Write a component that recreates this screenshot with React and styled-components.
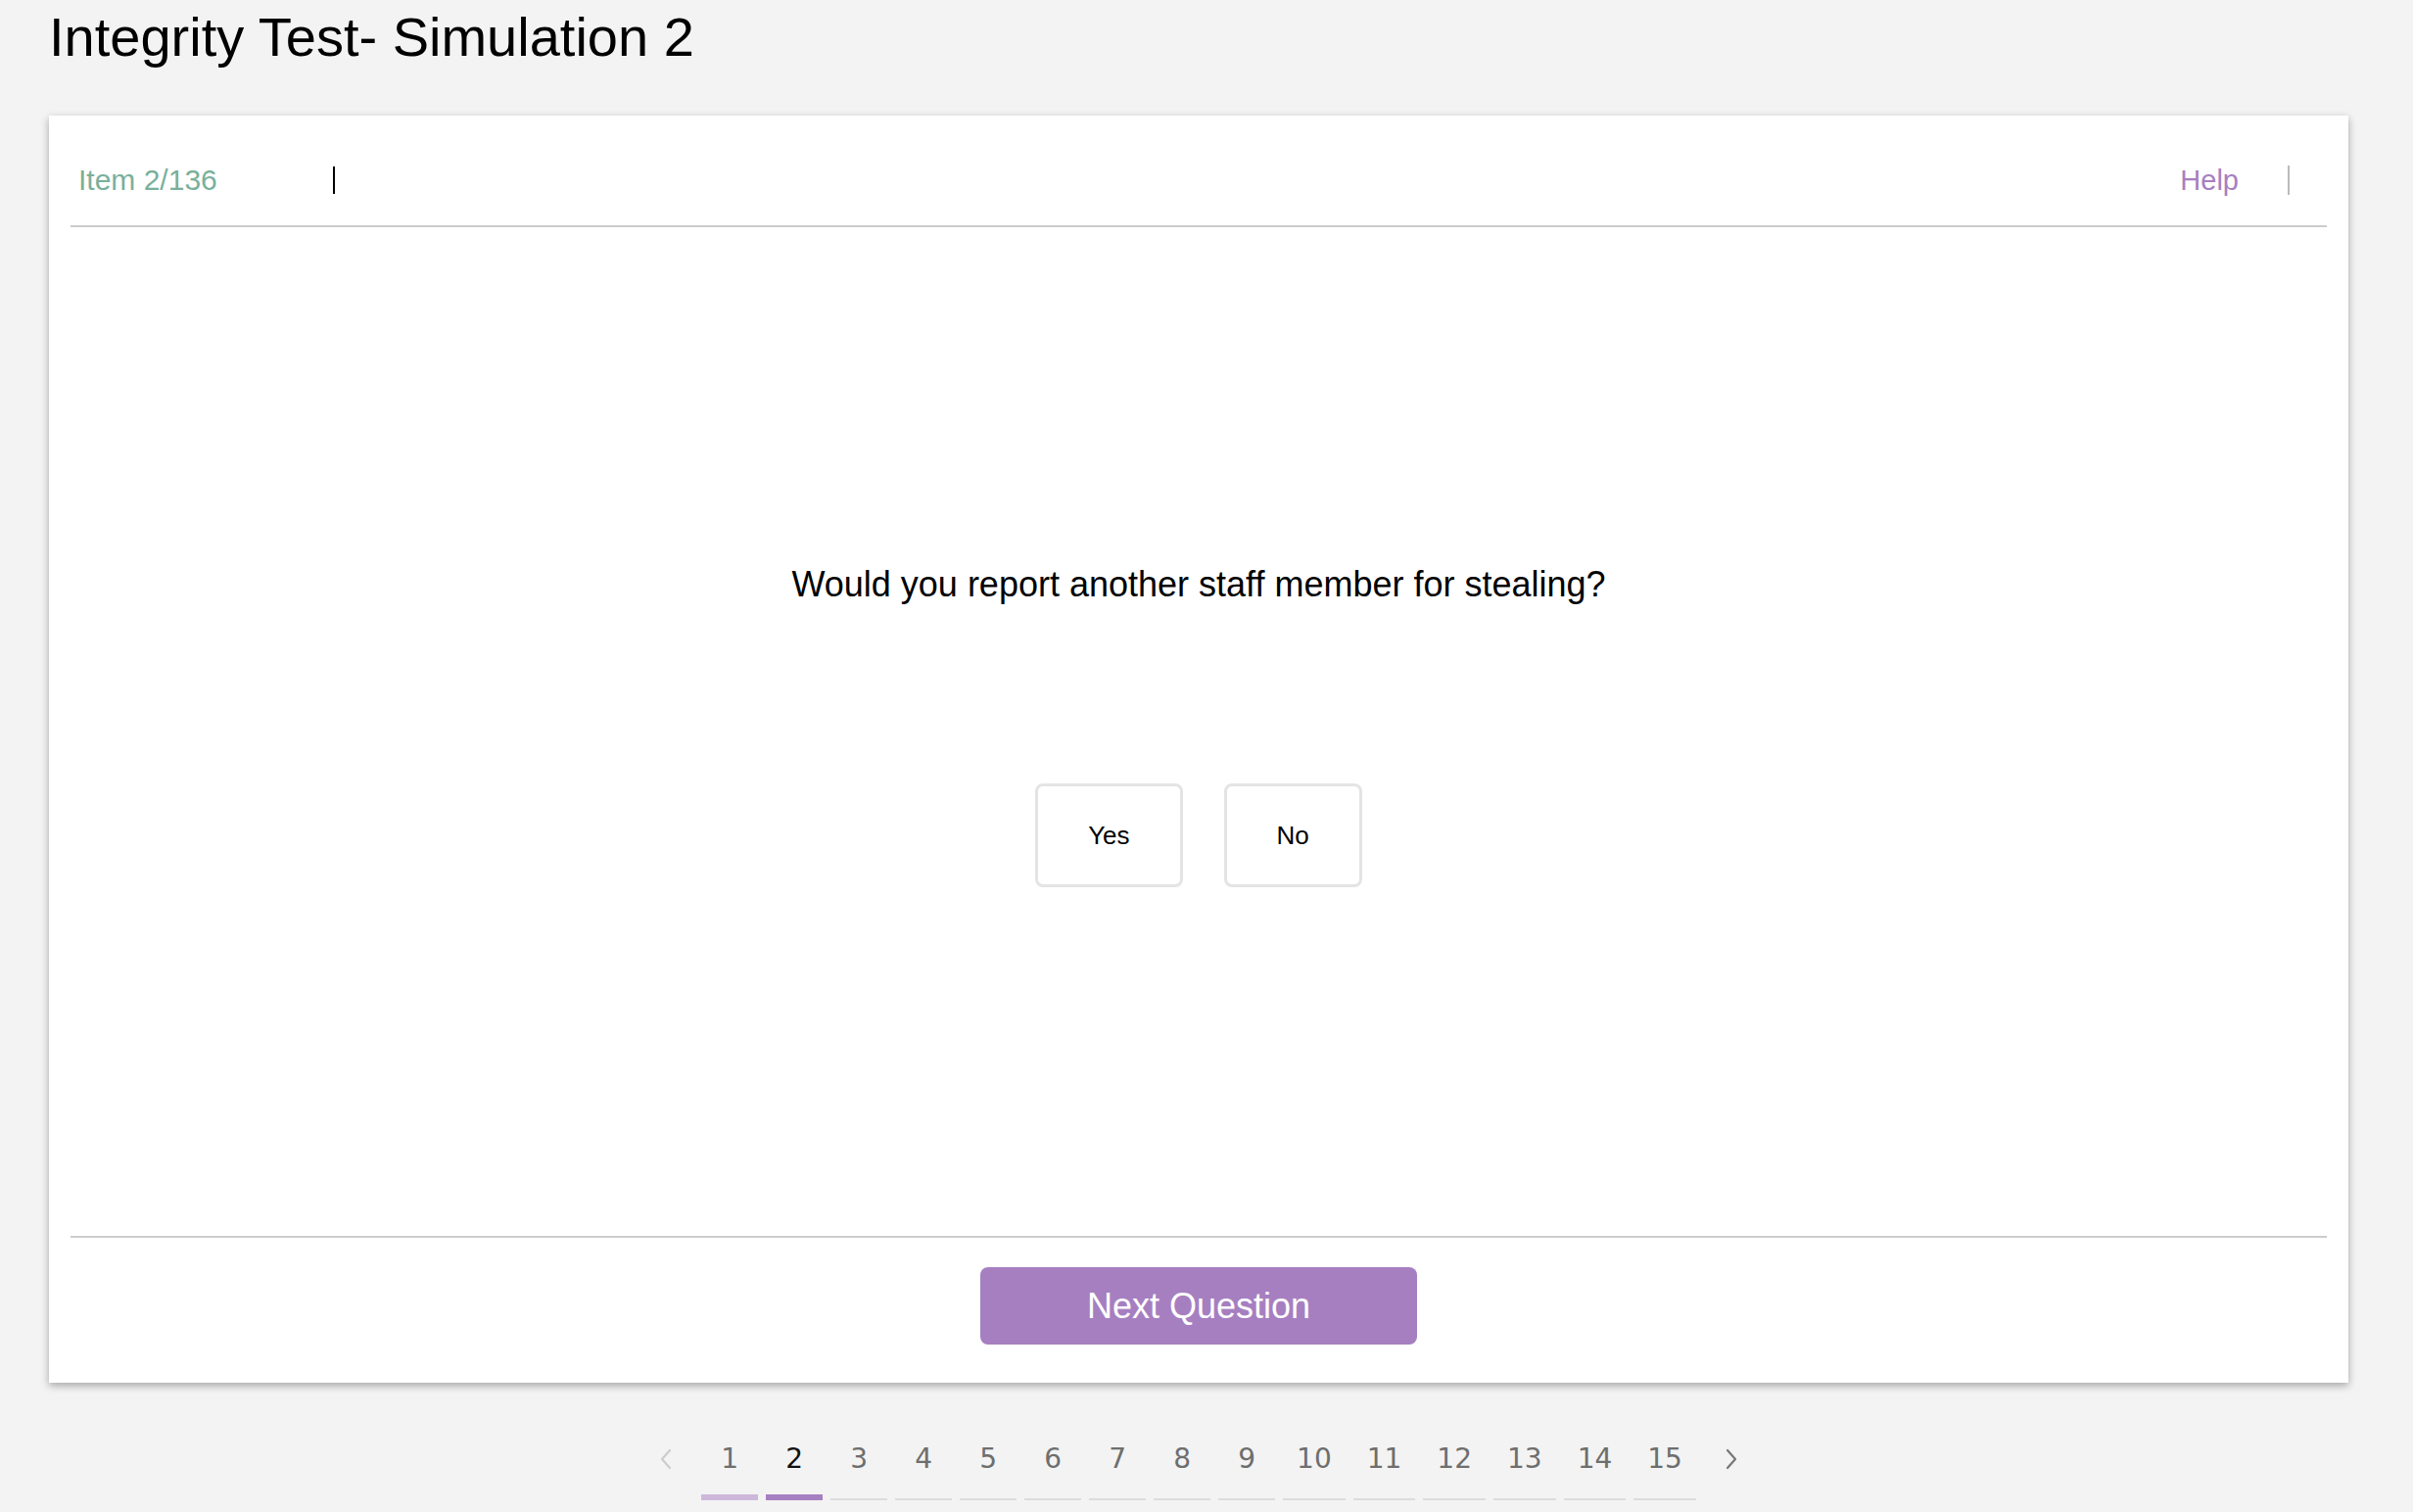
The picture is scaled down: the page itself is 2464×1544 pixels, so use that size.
import React from 'react'
import styled, { createGlobalStyle } from 'styled-components'

const GlobalStyle = createGlobalStyle`
  html, body {
    margin: 0;
    padding: 0;
    background: #f3f3f3;
    font-family: "Liberation Sans", Arial, sans-serif;
  }
`

const PURPLE = '#a67fc1'

const Page = styled.div`
  padding: 0 66px 0 50px;
`

const Title = styled.h1`
  margin: 6px 0 0 0;
  font-size: 56px;
  line-height: 64px;
  font-weight: 400;
  color: #000;
`

const Card = styled.section`
  margin-top: 48px;
  background: #fff;
  padding: 0 22px;
  box-shadow: 0 3px 8px rgba(0, 0, 0, 0.32);
`

const Header = styled.header`
  display: flex;
  align-items: center;
  padding: 51px 38px 31px 8px;
  border-bottom: 2px solid #cccccc;
`

const ItemCount = styled.span`
  font-size: 30px;
  line-height: 30px;
  color: #79b09b;
`

const Caret = styled.span`
  width: 2px;
  height: 28px;
  margin-left: 118px;
  background: #000;
`

const Spacer = styled.div`
  flex: 1;
`

const HelpLink = styled.a`
  font-size: 29px;
  line-height: 30px;
  color: ${PURPLE};
  cursor: pointer;
`

const Divider = styled.span`
  width: 2px;
  height: 30px;
  margin-left: 50px;
  background: #bbbbbb;
`

const Body = styled.div`
  display: flex;
  flex-direction: column;
  align-items: center;
  padding: 344px 0 356px;
`

const Question = styled.p`
  margin: 0;
  font-size: 36px;
  line-height: 42px;
  color: #000;
`

const Choices = styled.div`
  display: flex;
  gap: 42px;
  margin-top: 182px;
`

const Choice = styled.button`
  height: 106px;
  padding: 0 51px;
  border: 3px solid #e4e4e4;
  border-radius: 8px;
  background: #fff;
  font-family: inherit;
  font-size: 26px;
  color: #000;
  cursor: pointer;
`

const Footer = styled.footer`
  display: flex;
  justify-content: center;
  padding: 30px 0 39px;
  border-top: 2px solid #cccccc;
`

const NextButton = styled.button`
  width: 446px;
  height: 79px;
  border: none;
  border-radius: 8px;
  background: ${PURPLE};
  color: #fff;
  font-family: inherit;
  font-size: 36px;
  cursor: pointer;
`

const Pagination = styled.nav`
  display: flex;
  justify-content: center;
  gap: 8px;
  margin-top: 61px;
`

const PageItem = styled.div`
  display: flex;
  flex-direction: column;
  align-items: stretch;
  min-width: 58px;
  padding: 0 ${p => (p.$wide ? 14 : 0)}px;
  box-sizing: border-box;
  height: 59px;
`

const PageNum = styled.span`
  font-family: "DejaVu Sans", Verdana, sans-serif;
  font-size: 28px;
  line-height: 34px;
  text-align: center;
  color: ${p => (p.$active ? '#111' : '#6e6e6e')};
`

const Arrow = styled.span`
  display: flex;
  justify-content: center;
  align-items: center;
  height: 34px;
  color: ${p => (p.$disabled ? '#cccccc' : '#777777')};
`

const Bar = styled.div`
  margin-top: auto;
  margin-left: ${p => (p.$wide ? -14 : 0)}px;
  margin-right: ${p => (p.$wide ? -14 : 0)}px;
  height: ${p => (p.$state === 'idle' ? 2 : 6)}px;
  background: ${p =>
    p.$state === 'active' ? PURPLE : p.$state === 'done' ? '#cdb8dc' : '#dcdcdc'};
`

function Chevron ({ dir }) {
  const d = dir === 'left' ? 'M11 2 L3 11 L11 20' : 'M2 2 L10 11 L2 20'
  return (
    <svg width='13' height='22' viewBox='0 0 13 22' fill='none'>
      <path d={d} stroke='currentColor' strokeWidth='2.2' strokeLinecap='round' strokeLinejoin='round' />
    </svg>
  )
}

const pages = Array.from({ length: 15 }, (_, i) => i + 1)
const current = 2

export default function App () {
  return (
    <Page>
      <GlobalStyle />
      <Title>Integrity Test- Simulation 2</Title>
      <Card>
        <Header>
          <ItemCount>Item 2/136</ItemCount>
          <Caret />
          <Spacer />
          <HelpLink>Help</HelpLink>
          <Divider />
        </Header>
        <Body>
          <Question>Would you report another staff member for stealing?</Question>
          <Choices>
            <Choice>Yes</Choice>
            <Choice>No</Choice>
          </Choices>
        </Body>
        <Footer>
          <NextButton>Next Question</NextButton>
        </Footer>
      </Card>
      <Pagination>
        <PageItem>
          <Arrow $disabled><Chevron dir='left' /></Arrow>
        </PageItem>
        {pages.map(n => {
          const wide = n >= 10
          const state = n === current ? 'active' : n < current ? 'done' : 'idle'
          return (
            <PageItem key={n} $wide={wide}>
              <PageNum $active={n === current}>{n}</PageNum>
              <Bar $state={state} $wide={wide} />
            </PageItem>
          )
        })}
        <PageItem>
          <Arrow><Chevron dir='right' /></Arrow>
        </PageItem>
      </Pagination>
    </Page>
  )
}
